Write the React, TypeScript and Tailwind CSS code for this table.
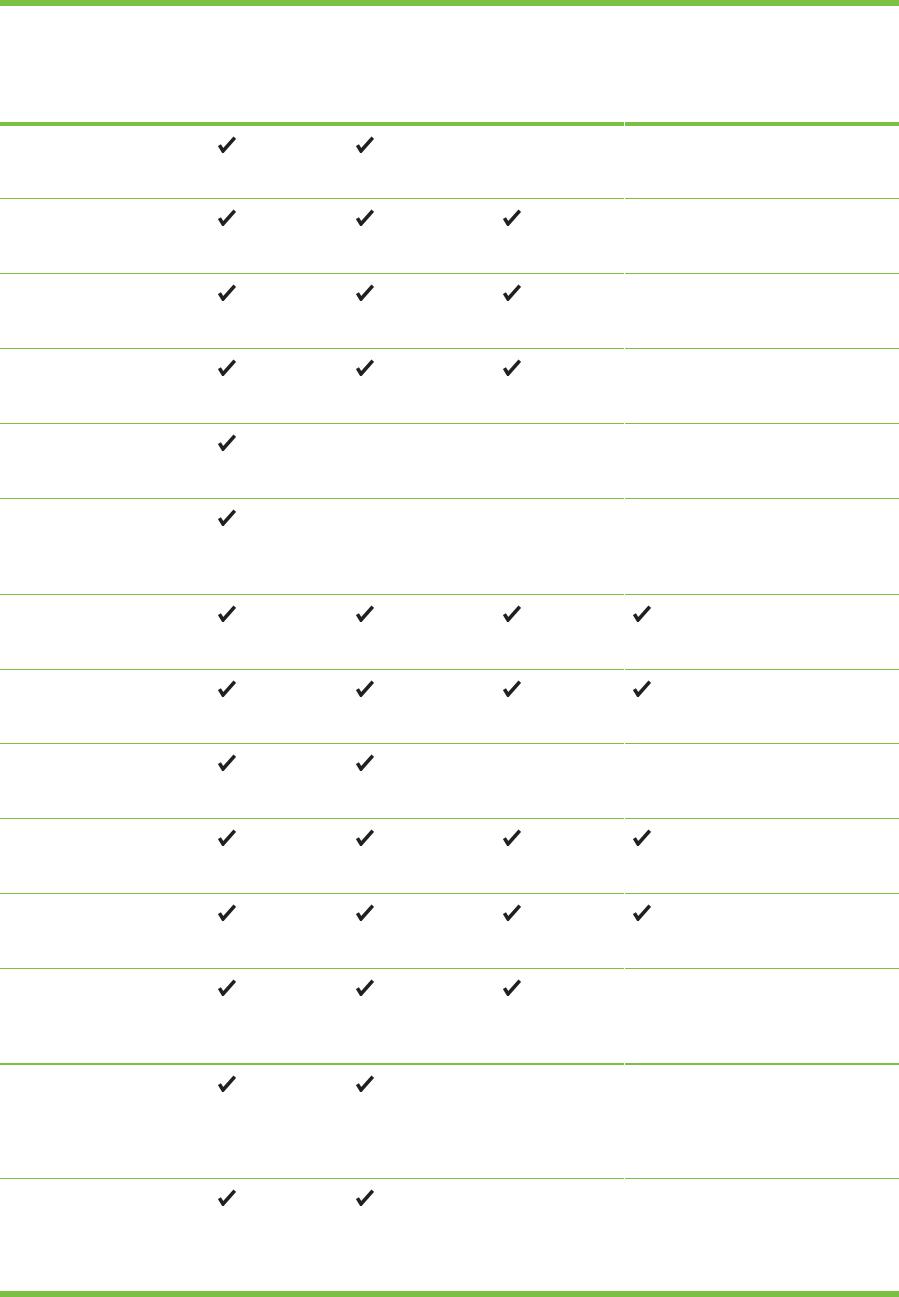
const rows: { h: string; b: string; marks: boolean[] }[] = [
  { h: "h-[73px]", b: "border-b", marks: [true, true, false, false] },
  { h: "h-[75px]", b: "border-b", marks: [true, true, true, false] },
  { h: "h-[75px]", b: "border-b", marks: [true, true, true, false] },
  { h: "h-[75px]", b: "border-b", marks: [true, true, true, false] },
  { h: "h-[75px]", b: "border-b", marks: [true, false, false, false] },
  { h: "h-[96px]", b: "border-b", marks: [true, false, false, false] },
  { h: "h-[75px]", b: "border-b", marks: [true, true, true, true] },
  { h: "h-[74px]", b: "border-b", marks: [true, true, true, true] },
  { h: "h-[75px]", b: "border-b", marks: [true, true, false, false] },
  { h: "h-[75px]", b: "border-b", marks: [true, true, true, true] },
  { h: "h-[75px]", b: "border-b", marks: [true, true, true, true] },
  { h: "h-[96px]", b: "border-b-2", marks: [true, true, true, false] },
  { h: "h-[114px]", b: "border-b", marks: [true, true, false, false] },
  { h: "h-[112px]", b: "", marks: [true, true, false, false] },
];

function Check() {
  return (
    <svg width="18" height="17" viewBox="0 0 18 17" className="block">
      <path
        d="M1.4 9.2 L5 15 L16.8 1.6"
        fill="none"
        stroke="#231f20"
        strokeWidth="3.6"
        strokeLinejoin="miter"
      />
    </svg>
  );
}

function App() {
  return (
    <div className="w-[899px] h-[1297px] bg-white font-['Liberation_Sans',sans-serif]">
      <div className="h-[6px] bg-[#7ac143]" />

      {/* header */}
      <div className="flex h-[120px]">
        <div className="w-[624px] border-b-4 border-[#7ac143]" />
        <div className="flex-1 ml-[1px] border-b-4 border-[#7ac143]" />
      </div>

      {rows.map((r, i) => (
        <div key={i} className={`flex ${r.h}`}>
          <div className={`w-[624px] grid grid-cols-[210px_138px_147px_129px] border-[#7ac143] ${r.b}`}>
            <div />
            {r.marks.slice(0, 3).map((m, j) => (
              <div key={j} className="pt-[10px] pl-[8px]">
                {m && <Check />}
              </div>
            ))}
          </div>
          <div className={`flex-1 ml-[1px] pt-[10px] pl-[8px] border-[#7ac143] ${r.b}`}>
            {r.marks[3] && <Check />}
          </div>
        </div>
      ))}

      <div className="h-[6px] bg-[#7ac143]" />
    </div>
  );
}

export default App;
